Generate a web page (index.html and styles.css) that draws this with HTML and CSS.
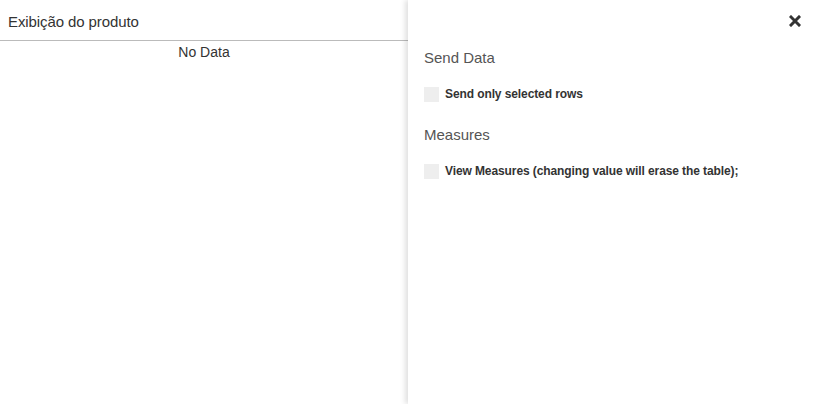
FILE: index.html
```html
<!DOCTYPE html>
<html>
<head>
<meta charset="utf-8">
<link rel="stylesheet" href="styles.css">
</head>
<body>
<div class="app">
  <div class="main">
    <div class="header">Exibição do produto</div>
    <div class="nodata">No Data</div>
  </div>
  <div class="side">
    <div class="close-row">
      <svg class="close" width="12" height="12" viewBox="0 0 12 12"><path d="M2 2 L10 10 M10 2 L2 10" stroke="#333" stroke-width="3" stroke-linecap="square"/></svg>
    </div>
    <div class="section-title">Send Data</div>
    <label class="check"><span class="box"></span><span class="lbl">Send only selected rows</span></label>
    <div class="section-title">Measures</div>
    <label class="check check-2"><span class="box"></span><span class="lbl">View Measures (changing value will erase the table);</span></label>
  </div>
</div>
</body>
</html>
```
FILE: styles.css
```css
html, body { margin: 0; padding: 0; background: #fff; }
body { font-family: "Liberation Sans", Arial, sans-serif; color: #333; }
.app { display: flex; width: 815px; height: 404px; overflow: hidden; }
.main { width: 408px; flex: none; }
.header { height: 41px; box-sizing: border-box; border-bottom: 1px solid #bbb; padding: 13px 0 0 8px; font-size: 15px; line-height: 18px; color: #333; letter-spacing: -0.1px; }
.nodata { text-align: center; font-size: 14px; line-height: 16px; padding-top: 3px; color: #333; }
.side { flex: 1; background: #fff; box-shadow: -3px 0 5px rgba(0,0,0,0.12); position: relative; padding: 0 14px 0 16px; }
.close-row { display: flex; justify-content: flex-end; padding-top: 15px; height: 12px; }
.close { display: block; }
.section-title { font-size: 15px; line-height: 18px; color: #555; margin-top: 22px; }
.check { display: flex; align-items: center; gap: 6px; margin-top: 20px; }
.box { width: 15px; height: 15px; background: #eee; flex: none; }
.lbl { font-size: 12px; font-weight: bold; color: #333; line-height: 15px; letter-spacing: -0.1px; }
.check + .section-title { margin-top: 24px; }
.check-2 { margin-top: 20px; }
```
